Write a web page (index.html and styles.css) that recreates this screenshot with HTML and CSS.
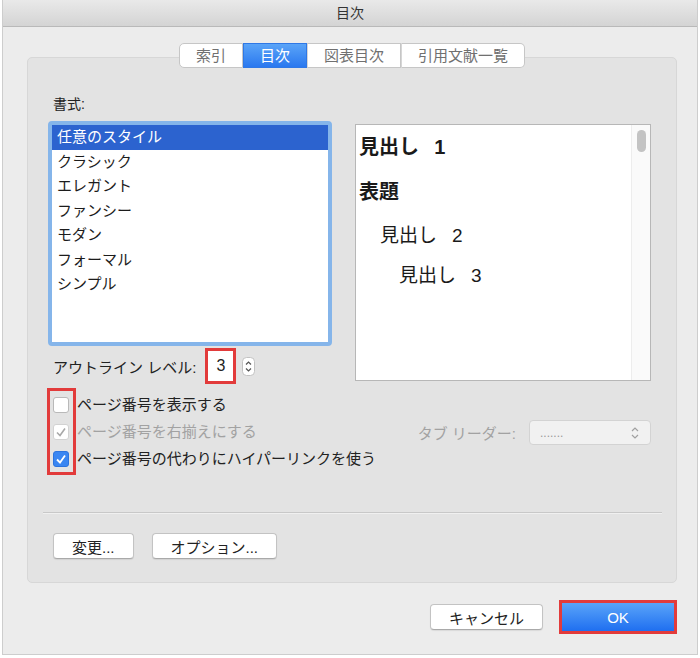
FILE: index.html
```html
<!DOCTYPE html>
<html lang="ja">
<head>
  <meta charset="UTF-8" />
  <meta name="viewport" content="width=device-width, initial-scale=1.0"/>
  <title>目次</title>
  <link rel="stylesheet" href="styles.css">
</head>
<body>
  <div class="window">
    <div class="titlebar">目次</div>

    <div class="body">
      <div class="tabs">
        <span class="tab">索引</span>
        <span class="tab active">目次</span>
        <span class="tab">図表目次</span>
        <span class="tab">引用文献一覧</span>
      </div>

      <div class="group">
        <div class="label">書式:</div>

        <div class="panes">
          <div class="left">
            <ul class="styles">
              <li class="selected">任意のスタイル</li>
              <li>クラシック</li>
              <li>エレガント</li>
              <li>ファンシー</li>
              <li>モダン</li>
              <li>フォーマル</li>
              <li>シンプル</li>
            </ul>

            <div class="outline">
              <span>アウトライン レベル:</span>
              <span class="level mark">3</span>
              <span class="stepper">
                <svg width="13" height="19" viewBox="0 0 13 19">
                  <rect x="0.5" y="0.5" width="12" height="18" rx="4" fill="#fff" stroke="#c2c2c2"/>
                  <path d="M4 7.5 L6.5 5 L9 7.5" fill="none" stroke="#555" stroke-width="1.2"/>
                  <path d="M4 11.5 L6.5 14 L9 11.5" fill="none" stroke="#555" stroke-width="1.2"/>
                </svg>
              </span>
            </div>
          </div>

          <div class="preview">
            <div class="preview-text">
              <div class="pv-h1">見出し 1</div>
              <div class="pv-title">表題</div>
              <div class="pv-h2">見出し 2</div>
              <div class="pv-h3">見出し 3</div>
            </div>
            <div class="scrollbar"><div class="thumb"></div></div>
          </div>
        </div>

        <div class="options">
          <div class="boxes mark">
            <span class="cell"><span class="cb"></span></span>
            <span class="cell">
              <span class="cb disabled">
                <svg width="16" height="16" viewBox="0 0 16 16"><path d="M4 8.5 L7 11.5 L12 4.5" fill="none" stroke="#a8a8a8" stroke-width="1.6"/></svg>
              </span>
            </span>
            <span class="cell">
              <span class="cb checked">
                <svg width="16" height="16" viewBox="0 0 16 16"><path d="M4 8.5 L7 11.5 L12 4.5" fill="none" stroke="#fff" stroke-width="1.8"/></svg>
              </span>
            </span>
          </div>
          <div class="option-labels">
            <div>ページ番号を表示する</div>
            <div class="dim">ページ番号を右揃えにする</div>
            <div>ページ番号の代わりにハイパーリンクを使う</div>
          </div>
          <div class="leader">
            <span class="dim">タブ リーダー:</span>
            <div class="select">
              <span>.......</span>
              <svg width="10" height="14" viewBox="0 0 10 14">
                <path d="M2 5 L5 2 L8 5" fill="none" stroke="#a0a0a0" stroke-width="1.2"/>
                <path d="M2 9 L5 12 L8 9" fill="none" stroke="#a0a0a0" stroke-width="1.2"/>
              </svg>
            </div>
          </div>
        </div>

        <div class="separator"></div>

        <div class="actions">
          <button class="btn">変更...</button>
          <button class="btn">オプション...</button>
        </div>
      </div>

      <div class="footer">
        <button class="btn">キャンセル</button>
        <div class="mark ok-frame"><button class="btn primary">OK</button></div>
      </div>
    </div>
  </div>
</body>
</html>
```

FILE: styles.css
```css
* {
  box-sizing: border-box;
}
body {
  margin: 0;
  background: #fff;
  font-family: "Liberation Sans", "Noto Sans CJK JP", sans-serif;
  color: #222;
}
.window {
  margin-left: 2px;
  width: 696px;
  height: 655px;
  background: #ececec;
  border: 1px solid #cdcdcd;
  border-top: none;
}
.titlebar {
  height: 27px;
  line-height: 26px;
  text-align: center;
  font-size: 14px;
  color: #333;
  background: linear-gradient(#e9e9e9, #d4d4d4);
  border-bottom: 1px solid #b9b9b9;
}
.body {
  padding: 16px 20px 0 24px;
}

/* segmented tabs sitting on the top edge of the group box */
.tabs {
  position: relative;
  z-index: 1;
  display: flex;
  justify-content: center;
  margin-bottom: -11px;
}
.tab {
  height: 25px;
  line-height: 23px;
  padding: 0 16px;
  font-size: 15px;
  color: #707070;
  background: #fff;
  border: 1px solid #c6c6c6;
  border-left: 1px solid #d6d6d6;
}
.tab:first-child {
  border-left: 1px solid #c6c6c6;
  border-radius: 5px 0 0 5px;
}
.tab:last-child {
  border-radius: 0 5px 5px 0;
}
.tab.active {
  color: #fff;
  background: linear-gradient(#5aa4f8, #2a78ef);
  border-color: #2f78e6;
}

.group {
  background: #e3e3e3;
  border: 1px solid #d7d7d7;
  border-radius: 5px;
  padding: 37px 25px 23px 20px;
}
.label {
  padding-left: 5px;
  font-size: 14px;
  line-height: 18px;
  margin-bottom: 8px;
}
.panes {
  display: flex;
  justify-content: space-between;
  align-items: flex-start;
}
.styles {
  list-style: none;
  margin: 0;
  padding: 0;
  width: 284px;
  height: 225px;
  background: #fff;
  border: 4px solid #85b5ea;
  border-radius: 4px;
}
.styles li {
  height: 24.5px;
  line-height: 24px;
  padding-left: 5px;
  font-size: 15px;
  color: #1c1c1c;
}
.styles li.selected {
  background: #2c63cf;
  color: #fff;
}

.preview {
  display: flex;
  margin-top: 3px;
  width: 296px;
  height: 257px;
  background: #fff;
  border: 1px solid #b7b7b7;
}
.preview-text {
  flex: 1;
  padding-left: 3px;
  word-spacing: 0.6em;
  color: #1a1a1a;
}
.pv-h1, .pv-title {
  font-size: 20px;
  font-weight: bold;
}
.pv-h1 { line-height: 44px; }
.pv-title { line-height: 46px; }
.pv-h2 {
  font-size: 19px;
  line-height: 42px;
  padding-left: 21px;
}
.pv-h3 {
  font-size: 19px;
  line-height: 38px;
  padding-left: 40px;
}
.scrollbar {
  width: 19px;
  background: #fafafa;
  border-left: 1px solid #ededed;
  padding-top: 5px;
}
.thumb {
  width: 9px;
  height: 22px;
  margin: 0 auto;
  background: #c3c3c3;
  border-radius: 5px;
}

/* red highlight frames */
.mark {
  border: 3px solid #e23b3b;
}

.outline {
  display: flex;
  align-items: center;
  height: 36px;
  margin-top: 2px;
  padding-left: 5px;
  font-size: 15px;
}
.level {
  width: 31px;
  height: 36px;
  margin-left: 9px;
  background: #fff;
  text-align: center;
  line-height: 30px;
  font-size: 16px;
}
.stepper {
  display: flex;
  margin-left: 6px;
}

.options {
  display: flex;
  align-items: flex-start;
  margin-top: 4px;
  font-size: 15px;
}
.boxes {
  display: flex;
  flex-direction: column;
  width: 29px;
  margin-left: -1px;
}
.cell {
  height: 27px;
  display: flex;
  align-items: center;
  padding-left: 3px;
}
.cb {
  width: 16px;
  height: 16px;
  background: #fff;
  border: 1px solid #b9b9b9;
  border-radius: 3px;
  display: flex;
}
.cb svg {
  margin: -1px;
}
.cb.disabled {
  border-color: #d2d2d2;
}
.cb.checked {
  background: #3a86f2;
  border-color: #2d74de;
}
.option-labels {
  margin-top: 3px;
  margin-left: 1px;
}
.option-labels div {
  height: 27px;
  line-height: 27px;
}
.dim {
  color: #a2a2a2;
}
.leader {
  display: flex;
  align-items: center;
  gap: 13px;
  margin-left: auto;
  margin-top: 32px;
}
.select {
  display: flex;
  align-items: center;
  justify-content: space-between;
  width: 122px;
  height: 25px;
  padding: 0 10px;
  background: #f1f1f1;
  border: 1px solid #d3d3d3;
  border-radius: 4px;
  font-size: 12px;
  color: #9a9a9a;
}

.separator {
  margin: 37px -11px 0 -5px;
  border-top: 1px solid #c8c8c8;
  border-bottom: 1px solid #f0f0f0;
}
.actions {
  display: flex;
  gap: 18px;
  margin-top: 19px;
  padding-left: 5px;
}
.btn {
  height: 26px;
  padding: 0 18px;
  font-family: inherit;
  font-size: 15px;
  color: #222;
  background: #fff;
  border: 1px solid #c3c3c3;
  border-bottom-color: #a9a9a9;
  border-radius: 4px;
  box-shadow: 0 1px 1px rgba(0, 0, 0, 0.08);
}

.footer {
  display: flex;
  justify-content: flex-end;
  align-items: center;
  gap: 16px;
  margin-top: 17px;
}
.ok-frame {
  display: flex;
}
.btn.primary {
  width: 112px;
  height: 28px;
  color: #fff;
  border: none;
  border-radius: 0;
  background: linear-gradient(#5aa4f9, #1f6ff0);
  box-shadow: none;
}
```
